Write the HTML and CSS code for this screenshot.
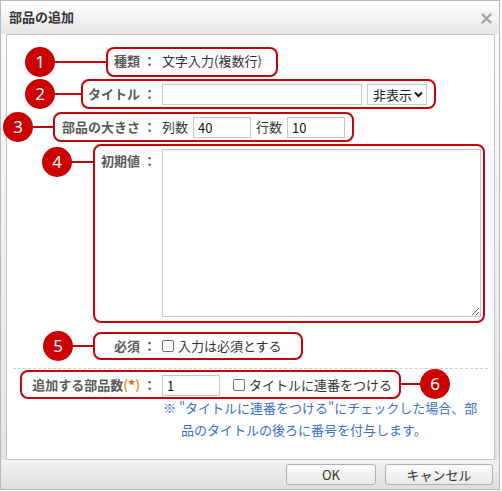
FILE: index.html
```html
<!DOCTYPE html>
<html lang="ja">
<head>
  <meta charset="UTF-8">
  <title>部品の追加</title>
  <link rel="stylesheet" href="styles.css">
</head>
<body>
  <div class="dialog">
    <div class="titlebar">
      <span class="title">部品の追加</span>
      <svg class="close" width="11" height="11" viewBox="0 0 11 11"><path d="M1.5 1.5 L9.5 9.5 M9.5 1.5 L1.5 9.5" stroke="#a3a3a3" stroke-width="2.4" stroke-linecap="round"/></svg>
    </div>

    <div class="panel">
      <div class="row r1">
        <div class="label">種類 ：</div>
        <div class="value">文字入力(複数行)</div>
      </div>
      <div class="row r2">
        <div class="label">タイトル ：</div>
        <div class="value">
          <input type="text" class="txt-title">
          <div class="select-wrap">
            <select class="sel"><option>非表示</option></select>
            <svg class="chev" width="9" height="7" viewBox="0 0 9 7"><path d="M1 1.5 L4.5 5 L8 1.5" fill="none" stroke="#111" stroke-width="2"/></svg>
          </div>
        </div>
      </div>
      <div class="row r3">
        <div class="label">部品の大きさ ：</div>
        <div class="value">
          <span>列数</span><input type="text" class="txt-num" value="40">
          <span>行数</span><input type="text" class="txt-num" value="10">
        </div>
      </div>
      <div class="row r4">
        <div class="label">初期値 ：</div>
        <div class="value"><textarea class="area"></textarea></div>
      </div>
      <div class="row r5">
        <div class="label">必須 ：</div>
        <div class="value"><label class="chk"><input type="checkbox"> 入力は必須とする</label></div>
      </div>
      <div class="sep"></div>
      <div class="row r6">
        <div class="label">追加する部品数<span class="req">(<b>*</b>)</span> ：</div>
        <div class="value">
          <input type="text" class="txt-num" value="1">
          <label class="chk chk-seq"><input type="checkbox"> タイトルに連番をつける</label>
        </div>
      </div>
      <p class="note">※ "タイトルに連番をつける"にチェックした場合、部品のタイトルの後ろに番号を付与します。</p>
    </div>

    <div class="footer">
      <button class="btn btn-ok">OK</button>
      <button class="btn btn-cancel">キャンセル</button>
    </div>

    <!-- callouts -->
    <div class="callouts">
      <div class="box b1"></div>
      <div class="box b2"></div>
      <div class="box b3"></div>
      <div class="box b4"></div>
      <div class="box b5"></div>
      <div class="box b6"></div>
      <div class="line l1"></div>
      <div class="line l2"></div>
      <div class="line l3"></div>
      <div class="line l4"></div>
      <div class="line l5"></div>
      <div class="line l6"></div>
      <div class="num n1">1</div>
      <div class="num n2">2</div>
      <div class="num n3">3</div>
      <div class="num n4">4</div>
      <div class="num n5">5</div>
      <div class="num n6">6</div>
    </div>
  </div>
</body>
</html>
```

FILE: styles.css
```css
* { box-sizing: border-box; }
body {
  margin: 0;
  background: #fff;
  font-family: "Noto Sans CJK JP", "Noto Sans", sans-serif;
  font-size: 13px;
  color: #333;
}
.dialog {
  position: relative;
  width: 500px;
  height: 490px;
  border: 1px solid #b9b9b9;
  background: linear-gradient(#fdfdfd, #e2e2e2);
  display: flex;
  flex-direction: column;
}
.titlebar {
  height: 33px;
  flex: none;
  display: flex;
  align-items: center;
  justify-content: space-between;
  padding: 0 8px 0 8px;
  background: linear-gradient(#fff, #e6e6e6);
}
.title {
  font-weight: bold;
  font-size: 13px;
  color: #333;
  line-height: 18px;
  margin-top: -1px;
}
.close { margin-top: 2px; margin-right: -1px; }

.panel {
  height: 426px;
  flex: none;
  margin: 0 4px 0 5px;
  border: 1px solid #c4c4c4;
  background: #fff;
}
.row {
  display: flex;
  align-items: center;
  height: 22px;
  line-height: 18px;
}
.label {
  width: 149px;
  flex: none;
  text-align: right;
  font-weight: bold;
  color: #5a5a5a;
  white-space: nowrap;
}
.value {
  margin-left: 6px;
  display: flex;
  align-items: center;
  color: #333;
}
.r1 { margin-top: 15px; }
.r2 { margin-top: 11px; }
.r3 { margin-top: 11px; }
.r4 { margin-top: 11px; height: 168px; align-items: flex-start; }
.r4 .label { padding-top: 3px; }
.r5 { margin-top: 18px; }
.r6 { margin-top: 5px; }

input[type="text"], select, textarea {
  font-family: inherit;
  font-size: 13px;
  color: #111;
  border: 1px solid #c8c8c8;
  background: #fff;
  border-radius: 0;
  outline: none;
  margin: 0;
}
input[type="text"] {
  height: 21px;
  padding: 0 4px;
}
.txt-title { width: 200px; }
.txt-num { width: 58px; margin: 0 5px !important; }
.r3 .value span:first-child { margin-left: 0; }
.r6 .txt-num { margin-left: 0 !important; }
.r3 .txt-num + span { margin-left: 0; }

.select-wrap {
  position: relative;
  margin-left: 5px;
}
.sel {
  -webkit-appearance: none;
  appearance: none;
  width: 60px;
  height: 21px;
  padding: 0 0 0 5px;
  color: #222;
}
.chev {
  position: absolute;
  right: 4px;
  top: 7px;
  pointer-events: none;
}
.area {
  width: 319px;
  height: 168px;
  resize: both;
  padding: 3px;
}
.chk {
  display: flex;
  align-items: center;
  color: #333;
}
.chk input {
  -webkit-appearance: none;
  appearance: none;
  width: 12px;
  height: 12px;
  border: 1px solid #6f6f6f;
  border-radius: 2px;
  margin: 0 4px 0 0;
  background: #fff;
}
.chk-seq { margin-left: 8px; }
.req { color: #f0962a; font-weight: bold; }
.req b { color: #e8651a; }

.sep {
  margin: 11px 6px 0 6px;
  border-top: 1px dashed #cfcfcf;
}
.note {
  margin: 1px 0 0 156px;
  width: 318px;
  padding-left: 18px;
  text-indent: -18px;
  line-height: 22px;
  color: #3a6fca;
}

.footer {
  flex: 1;
  display: flex;
  justify-content: flex-end;
  align-items: flex-start;
  gap: 9px;
  padding: 4px 6px 0 0;
  background: linear-gradient(#f3f3f3, #dedede);
}
.btn {
  height: 21px;
  border: 1px solid #b0b0b0;
  border-radius: 3px;
  background: linear-gradient(#fbfbfb, #e9e9e9);
  font-family: inherit;
  font-size: 13px;
  color: #333;
  padding: 0;
  line-height: 17px;
}
.btn-ok { width: 90px; }
.btn-cancel { width: 108px; }

/* callouts */
.callouts {
  position: absolute;
  left: -1px;
  top: -1px;
  width: 502px;
  height: 491px;
  pointer-events: none;
}
.box {
  position: absolute;
  border: 2px solid #c8000a;
  border-radius: 8px;
}
.b1 { left: 106px; top: 47px; width: 172px; height: 30px; }
.b2 { left: 81px; top: 79px; width: 355px; height: 30px; }
.b3 { left: 53px; top: 112px; width: 301px; height: 30px; }
.b4 { left: 93px; top: 144px; width: 392px; height: 179px; }
.b5 { left: 93px; top: 332px; width: 210px; height: 28px; }
.b6 { left: 20px; top: 370px; width: 381px; height: 29px; }
.line {
  position: absolute;
  height: 2px;
  background: #c8000a;
}
.l1 { left: 50px; top: 61px; width: 57px; }
.l2 { left: 50px; top: 93px; width: 32px; }
.l3 { left: 30px; top: 126px; width: 24px; }
.l4 { left: 68px; top: 161px; width: 26px; }
.l5 { left: 68px; top: 345px; width: 26px; }
.l6 { left: 400px; top: 383px; width: 24px; }
.num {
  position: absolute;
  width: 30px;
  height: 30px;
  border-radius: 50%;
  background: #cc0000;
  color: #fff;
  font-family: "Noto Sans", sans-serif;
  font-size: 17px;
  line-height: 30px;
  text-align: center;
}
.n1 { left: 25px; top: 47px; }
.n2 { left: 25px; top: 79px; }
.n3 { left: 3px; top: 112px; }
.n4 { left: 42px; top: 147px; }
.n5 { left: 43px; top: 331px; }
.n6 { left: 420px; top: 369px; }
```
